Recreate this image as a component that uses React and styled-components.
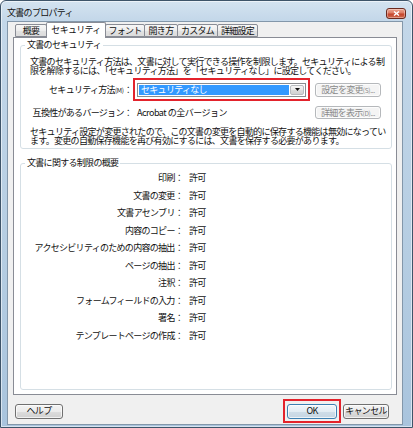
import React from 'react';
import styled, { createGlobalStyle } from 'styled-components';

const FONT = `"Noto Sans CJK JP", "Noto Sans", sans-serif`;

const Global = createGlobalStyle`
  html, body { margin: 0; padding: 0; background: #ffffff; }
  body { font-family: ${FONT}; }
  * { box-sizing: border-box; }
`;

const Window = styled.div`
  width: 413px;
  height: 428px;
  border: 1px solid #3e5469;
  border-radius: 6px 6px 0 0;
  background: linear-gradient(180deg, #d4e3f0 0px, #c3d7e9 20px, #b5cde2 60%, #a9c4dd 100%);
  box-shadow: inset 0 0 0 1px rgba(255, 255, 255, 0.55);
  display: flex;
  flex-direction: column;
  font-family: ${FONT};
  font-size: 9px;
  letter-spacing: -0.7px;
  color: #111;
  overflow: hidden;
`;

const TitleBar = styled.div`
  height: 20px;
  flex: none;
  display: flex;
  align-items: center;
  justify-content: space-between;
  padding: 4px 6px 0 6px;
`;

const Title = styled.div`
  line-height: 10px;
  color: #111;
`;

const CloseBtn = styled.div`
  width: 20px;
  height: 11px;
  border: 1px solid #6b2a1e;
  border-radius: 3px;
  background: linear-gradient(180deg, #eda692 0%, #dc7b63 45%, #c5442b 55%, #d06b4f 100%);
  box-shadow: inset 0 0 0 1px rgba(255, 255, 255, 0.35);
  display: flex;
  align-items: center;
  justify-content: center;
`;

const Client = styled.div`
  margin: 0 9px 2px 6px;
  height: 404px;
  flex: none;
  background: #f0f0f0;
  border: 1px solid #8397aa;
  display: flex;
  flex-direction: column;
  padding: 0 5px;
`;

const TabStrip = styled.div`
  height: 16px;
  display: flex;
  align-items: flex-end;
  padding-left: 2px;
  position: relative;
  z-index: 1;
`;

const Tab = styled.div`
  width: ${(p) => p.$w}px;
  height: ${(p) => (p.$selected ? 16 : 13)}px;
  margin-bottom: ${(p) => (p.$selected ? 0 : 1)}px;
  margin-right: -1px;
  border: 1px solid #898c95;
  border-bottom: ${(p) => (p.$selected ? 'none' : '1px solid #898c95')};
  border-radius: 2px 2px 0 0;
  background: ${(p) =>
    p.$selected ? '#ffffff' : 'linear-gradient(180deg, #f7f7f7 0%, #ededed 50%, #e3e3e3 51%, #dcdcdc 100%)'};
  display: flex;
  align-items: center;
  justify-content: center;
  padding-bottom: ${(p) => (p.$selected ? 1 : 0)}px;
  line-height: 10px;
  white-space: nowrap;
`;

const Panel = styled.div`
  height: 358px;
  flex: none;
  margin-top: -1px;
  background: #ffffff;
  border: 1px solid #898c95;
  padding: 2px 4px 0 6px;
  display: flex;
  flex-direction: column;
`;

const Group = styled.fieldset`
  margin: ${(p) => p.$mt || 0}px 0 0 0;
  padding: 0;
  height: ${(p) => p.$h}px;
  border: 1px solid #d5dfe5;
  border-radius: 3px;
  min-width: 0;
`;

const Legend = styled.legend`
  margin-left: 4px;
  padding: 0 2px;
  line-height: 10px;
  height: 10px;
`;

const Para = styled.p`
  margin: ${(p) => p.$mt}px 0 0 0;
  padding-left: 9px;
  line-height: 9px;
  white-space: nowrap;
`;

const Row = styled.div`
  display: flex;
  align-items: center;
  height: ${(p) => p.$h}px;
  margin-top: ${(p) => p.$mt}px;
  padding-right: 10px;
`;

const Label = styled.div`
  width: 112px;
  flex: none;
  text-align: right;
  padding-right: 1px;
  white-space: nowrap;
  line-height: 10px;
`;

const Small = styled.span`
  font-size: 6.5px;
  letter-spacing: -0.3px;
`;

const Value = styled.div`
  margin-left: 4px;
  white-space: nowrap;
  line-height: 10px;
  letter-spacing: -0.5px;
`;

const RedBox = styled.div`
  border: 2px solid #e3232c;
  padding: 0 2px;
  width: ${(p) => p.$w}px;
  height: ${(p) => p.$h}px;
  display: flex;
  align-items: center;
  flex: none;
`;

const Select = styled.div`
  width: 100%;
  height: 14px;
  border: 1px solid #8a8c8f;
  background: #ffffff;
  display: flex;
  padding: 1px;
`;

const Selection = styled.div`
  flex: 1;
  background: #3399ff;
  color: #ffffff;
  line-height: 10px;
  padding-left: 2px;
  white-space: nowrap;
`;

const Arrow = styled.div`
  width: 14px;
  margin-left: 1px;
  border: 1px solid #b9bcc0;
  border-radius: 2px;
  background: linear-gradient(180deg, #f6f6f6 0%, #e9e9e9 50%, #dcdcdc 51%, #d2d2d2 100%);
  display: flex;
  align-items: center;
  justify-content: center;
`;

const Button = styled.div`
  width: ${(p) => p.$w}px;
  height: ${(p) => p.$h || 15}px;
  flex: none;
  margin-left: ${(p) => (p.$auto ? 'auto' : `${p.$ml || 0}px`)};
  border: 1px solid ${(p) => (p.$disabled ? '#b5b8bb' : p.$default ? '#3c7fb1' : '#707070')};
  border-radius: 3px;
  background: ${(p) =>
    p.$disabled
      ? '#f4f4f4'
      : p.$default
      ? 'linear-gradient(180deg, #f1f6fa 0%, #e2ecf3 50%, #cfdde8 51%, #c6d6e3 100%)'
      : 'linear-gradient(180deg, #f3f3f3 0%, #ebebeb 50%, #dddddd 51%, #d0d0d0 100%)'};
  box-shadow: inset 0 0 0 1px rgba(255, 255, 255, 0.7);
  color: ${(p) => (p.$disabled ? '#8a8a8a' : '#111')};
  display: flex;
  align-items: center;
  justify-content: center;
  line-height: 10px;
  white-space: nowrap;
`;

const Limits = styled.div`
  display: grid;
  grid-template-columns: 162px auto;
  column-gap: 6px;
  margin-top: 1px;
  line-height: 17.55px;
`;

const LimitLabel = styled.div`
  text-align: right;
  white-space: nowrap;
`;

const LimitValue = styled.div`
  white-space: nowrap;
`;

const ButtonRow = styled.div`
  height: 24px;
  margin-top: 4px;
  flex: none;
  display: flex;
  align-items: center;
  padding: 0 8px 0 2px;
`;

const Spacer = styled.div`
  flex: 1;
`;

const tabs = [
  { label: '概要', w: 32 },
  { label: 'セキュリティ', w: 60, selected: true },
  { label: 'フォント', w: 40 },
  { label: '開き方', w: 34 },
  { label: 'カスタム', w: 41 },
  { label: '詳細設定', w: 41 },
];

const limits = [
  '印刷',
  '文書の変更',
  '文書アセンブリ',
  '内容のコピー',
  'アクセシビリティのための内容の抽出',
  'ページの抽出',
  '注釈',
  'フォームフィールドの入力',
  '署名',
  'テンプレートページの作成',
];

export default function App() {
  return (
    <>
      <Global />
      <Window>
        <TitleBar>
          <Title>文書のプロパティ</Title>
          <CloseBtn>
            <svg width="7" height="5" viewBox="0 0 7 5">
              <path d="M1 0.5 L6 4.5 M6 0.5 L1 4.5" stroke="#ffffff" strokeWidth="1.4" />
            </svg>
          </CloseBtn>
        </TitleBar>
        <Client>
          <TabStrip>
            {tabs.map((t) => (
              <Tab key={t.label} $w={t.w} $selected={t.selected}>
                {t.label}
              </Tab>
            ))}
          </TabStrip>
          <Panel>
            <Group $h={109}>
              <Legend>文書のセキュリティ</Legend>
              <Para $mt={7}>
                文書のセキュリティ方法は、文書に対して実行できる操作を制限します。セキュリティによる制
                <br />
                限を解除するには、「セキュリティ方法」を「セキュリティなし」に設定してください。
              </Para>
              <Row $h={23} $mt={3}>
                <Label>
                  セキュリティ方法<Small>(M)</Small>：
                </Label>
                <RedBox $w={177} $h={23}>
                  <Select>
                    <Selection>セキュリティなし</Selection>
                    <Arrow>
                      <svg width="5" height="3" viewBox="0 0 5 3">
                        <polygon points="0,0 5,0 2.5,3" fill="#111" />
                      </svg>
                    </Arrow>
                  </Select>
                </RedBox>
                <Button $w={66} $h={14} $auto $disabled>
                  設定を変更<Small>(S)...</Small>
                </Button>
              </Row>
              <Row $h={13} $mt={5}>
                <Label>互換性があるバージョン：</Label>
                <Value>Acrobat の全バージョン</Value>
                <Button $w={66} $h={13} $auto $disabled>
                  詳細を表示<Small>(D)...</Small>
                </Button>
              </Row>
              <Para $mt={8}>
                セキュリティ設定が変更されたので、この文書の変更を自動的に保存する機能は無効になってい
                <br />
                ます。変更の自動保存機能を再び有効にするには、文書を保存する必要があります。
              </Para>
            </Group>
            <Group $h={232} $mt={9}>
              <Legend>文書に関する制限の概要</Legend>
              <Limits>
                {limits.map((l) => (
                  <React.Fragment key={l}>
                    <LimitLabel>{l}：</LimitLabel>
                    <LimitValue>許可</LimitValue>
                  </React.Fragment>
                ))}
              </Limits>
            </Group>
          </Panel>
          <ButtonRow>
            <Button $w={48}>ヘルプ</Button>
            <Spacer />
            <RedBox $w={58} $h={24}>
              <Button $w={50} $default>
                OK
              </Button>
            </RedBox>
            <Button $w={46} $ml={2}>
              キャンセル
            </Button>
          </ButtonRow>
        </Client>
      </Window>
    </>
  );
}
